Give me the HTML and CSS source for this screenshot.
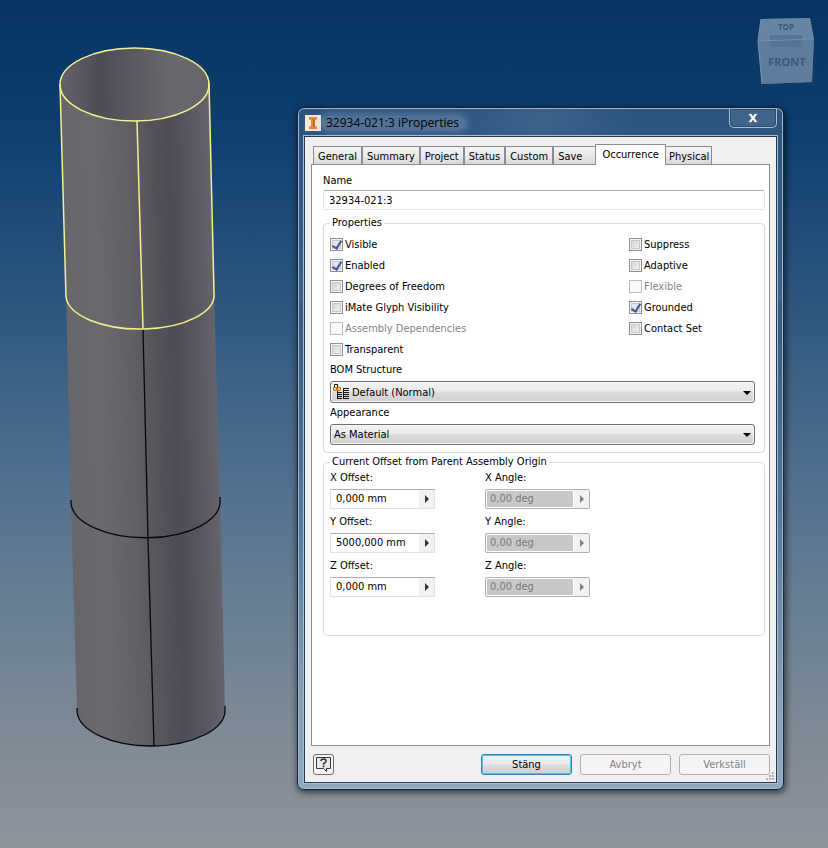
FILE: index.html
```html
<!DOCTYPE html>
<html lang="en">
<head>
<meta charset="utf-8">
<title>32934-021:3 iProperties</title>
<link rel="stylesheet" href="styles.css">
</head>
<body>
<main class="desktop">
  <svg class="model" viewBox="0 0 180 720" aria-hidden="true">
    <defs>
      <linearGradient id="outer" gradientUnits="userSpaceOnUse" x1="18" y1="362" x2="168" y2="358">
        <stop offset="0" stop-color="#67666b"/><stop offset=".22" stop-color="#6a696f"/>
        <stop offset=".45" stop-color="#605f66"/><stop offset=".6" stop-color="#54535a"/>
        <stop offset=".72" stop-color="#4e4d55"/><stop offset=".85" stop-color="#575660"/>
        <stop offset="1" stop-color="#66656c"/>
      </linearGradient>
      <linearGradient id="inner" gradientUnits="userSpaceOnUse" x1="10" y1="46" x2="159" y2="42">
        <stop offset="0" stop-color="#64636b"/><stop offset=".26" stop-color="#4e4d55"/>
        <stop offset=".42" stop-color="#56555d"/><stop offset=".75" stop-color="#69686e"/>
        <stop offset="1" stop-color="#66656b"/>
      </linearGradient>
    </defs>
    <path fill="url(#outer)" d="M10 46L16 257L21 463L27 671A74 36 0 0 0 175 669L170 460L164 253L159 43Z"/>
    <path fill="none" stroke="#08080c" stroke-width="1.3" d="M21 460v3A74 36 0 0 0 170 460v-3M27 668v3A74 36 0 0 0 175 669v-3M93 289L98 498L104 706"/>
    <ellipse cx="84.500" cy="44.500" rx="74.500" ry="36.500" fill="url(#inner)"/>
    <g fill="none" stroke="#f2f28c" stroke-width="1.5">
      <ellipse cx="84.500" cy="44.500" rx="74.500" ry="36.500"/>
      <path d="M10 44L16 257A74 34 0 0 0 164 253L159 43M87 81L93 289"/>
    </g>
  </svg>

  <svg class="viewcube" viewBox="0 0 64 76" role="img" aria-label="View cube">
    <path fill="#557595" d="M6 9L55 8L59 29L57 72L7 74L3 31Z"/>
    <path fill="#6684a3" d="M6 9L55 8L59 29L3 31Z"/>
    <path fill="#5e7c9b" d="M3 31L59 29L57 72L7 74Z"/>
    <path fill="#577294" d="M15 25H47V37H15Z"/>
    <path fill="none" stroke="#7591ad" d="M3 31L59 29M6 9L3 31L7 74"/>
    <text class="cube-top" x="31" y="20" text-anchor="middle">TOP</text>
    <text class="cube-front" x="32" y="56" text-anchor="middle">FRONT</text>
  </svg>

  <section class="dialog" role="dialog" aria-labelledby="dialog-title">
    <header class="titlebar">
      <svg class="app-icon" viewBox="0 0 16 16" aria-hidden="true"><path fill="#fbe9d8" d="M0 0h16v16H0z"/><path fill="#e08a3c" d="M4 2h8v2.500L10 5v6l2 .5V14H4v-2.500L6 11V5L4 4.500z"/><path fill="#b8621c" d="M8 4h1.500v8H8z"/></svg>
      <h1 id="dialog-title">32934-021:3 iProperties</h1>
      <button class="close" type="button" aria-label="Close"><svg viewBox="0 0 12 10" aria-hidden="true"><path fill="#fff" stroke="#34506f" stroke-width=".6" d="M1 .5h3.300L6 2.800 7.700.5H11L7.800 5 11 9.500H7.700L6 7.200 4.300 9.500H1L4.200 5z"/></svg></button>
    </header>
    <form class="client">
      <nav class="tabs" role="tablist">
        <button type="button" role="tab">General</button>
        <button type="button" role="tab">Summary</button>
        <button type="button" role="tab">Project</button>
        <button type="button" role="tab">Status</button>
        <button type="button" role="tab">Custom</button>
        <button type="button" role="tab" class="tab-save">Save</button>
        <button type="button" role="tab" class="active" aria-selected="true">Occurrence</button>
        <button type="button" role="tab" class="tab-last">Physical</button>
      </nav>
      <div class="panel" role="tabpanel">
        <label class="name-label" for="name">Name</label>
        <input class="name" id="name" type="text" value="32934-021:3">

        <fieldset class="properties">
          <legend>Properties</legend>
          <div class="checks">
            <div class="check-column">
              <label><input type="checkbox" checked>Visible</label>
              <label><input type="checkbox" checked>Enabled</label>
              <label><input type="checkbox">Degrees of Freedom</label>
              <label><input type="checkbox">iMate Glyph Visibility</label>
              <label class="off"><input type="checkbox" disabled>Assembly Dependencies</label>
              <label><input type="checkbox">Transparent</label>
            </div>
            <div class="check-column">
              <label><input type="checkbox">Suppress</label>
              <label><input type="checkbox">Adaptive</label>
              <label class="off"><input type="checkbox" disabled>Flexible</label>
              <label><input type="checkbox" checked>Grounded</label>
              <label><input type="checkbox">Contact Set</label>
            </div>
          </div>
          <label class="block-label" for="bom">BOM Structure</label>
          <div class="drop with-icon">
            <select id="bom"><option>Default (Normal)</option></select>
            <svg class="bom-icon" viewBox="0 0 17 16" aria-hidden="true"><path fill="none" stroke="#111" d="M1.500.5h3v3h-3zM4.500 6v9M10.500 4v11"/><path fill="#fbd28a" stroke="#d9720c" d="M.5 3.500h3v3h-3zM4.500 3.500h3v3h-3z"/><path stroke="#111" d="M4 8.500h5M4 10.500h5M4 12.500h5M4 14.500h5M10 4.500h6M10 6.500h6M10 8.500h6M10 10.500h6M10 12.500h6M10 14.500h6"/></svg>
            <svg class="arrow" viewBox="0 0 8 4" aria-hidden="true"><path d="M0 0h8L4 4z"/></svg>
          </div>
          <label class="block-label" for="appearance">Appearance</label>
          <div class="drop">
            <select id="appearance"><option>As Material</option></select>
            <svg class="arrow" viewBox="0 0 8 4" aria-hidden="true"><path d="M0 0h8L4 4z"/></svg>
          </div>
        </fieldset>

        <fieldset class="offsets">
          <legend>Current Offset from Parent Assembly Origin</legend>
          <div class="offset-grid">
            <div class="field"><label for="xo">X Offset:</label><div class="spin"><input id="xo" type="text" value="0,000 mm"><button type="button" aria-label="X offset options"><svg viewBox="0 0 4 8"><path d="M0 0l4 4-4 4z"/></svg></button></div></div>
            <div class="field"><label for="xa">X Angle:</label><div class="spin locked"><input id="xa" type="text" value="0,00 deg" disabled><button type="button" disabled aria-label="X angle options"><svg viewBox="0 0 4 8"><path d="M0 0l4 4-4 4z"/></svg></button></div></div>
            <div class="field"><label for="yo">Y Offset:</label><div class="spin"><input id="yo" type="text" value="5000,000 mm"><button type="button" aria-label="Y offset options"><svg viewBox="0 0 4 8"><path d="M0 0l4 4-4 4z"/></svg></button></div></div>
            <div class="field"><label for="ya">Y Angle:</label><div class="spin locked"><input id="ya" type="text" value="0,00 deg" disabled><button type="button" disabled aria-label="Y angle options"><svg viewBox="0 0 4 8"><path d="M0 0l4 4-4 4z"/></svg></button></div></div>
            <div class="field"><label for="zo">Z Offset:</label><div class="spin"><input id="zo" type="text" value="0,000 mm"><button type="button" aria-label="Z offset options"><svg viewBox="0 0 4 8"><path d="M0 0l4 4-4 4z"/></svg></button></div></div>
            <div class="field"><label for="za">Z Angle:</label><div class="spin locked"><input id="za" type="text" value="0,00 deg" disabled><button type="button" disabled aria-label="Z angle options"><svg viewBox="0 0 4 8"><path d="M0 0l4 4-4 4z"/></svg></button></div></div>
          </div>
        </fieldset>
      </div>
      <footer class="actions">
        <button class="help" type="button" aria-label="Help"><svg viewBox="0 0 17 17" aria-hidden="true"><path fill="#e6e8ec" stroke="#39393f" d="M1.500 1.500h14v11h-4v3L8.500 12.500h-7z"/><path fill="none" stroke="#26262c" stroke-width="1.500" d="M6 5q0-2 2.500-2T11 5q0 1-1.300 1.800Q8.500 7.500 8.500 8.700"/><path fill="#26262c" d="M7.700 9.700h1.700v1.600H7.700z"/></svg></button>
        <button class="action default" type="button">Stäng</button>
        <button class="action" type="button" disabled>Avbryt</button>
        <button class="action" type="button" disabled>Verkställ</button>
      </footer>
      <svg class="grip" viewBox="0 0 9 9" aria-hidden="true"><path fill="#b4b4b4" d="M6 0h2v2H6zM3 3h2v2H3zM6 3h2v2H6zM0 6h2v2H0zM3 6h2v2H3zM6 6h2v2H6z"/></svg>
    </form>
  </section>
</main>
</body>
</html>
```
FILE: styles.css
```css
* { box-sizing: border-box; }

body {
  margin: 0;
  color: #000;
  font: 11px/14px Tahoma, "DejaVu Sans Condensed", sans-serif;
}

button, input, select { font: inherit; color: inherit; margin: 0; }

svg { display: block; }

.desktop {
  position: relative;
  display: flow-root;
  min-height: 100vh;
  background: linear-gradient(#073462, #0f3f70 16%, #2f587f 37%, #54718f 58%, #6f8292 76%, #848d96 90%, #8e939b);
}

.model { position: absolute; left: 50px; top: 40px; width: 180px; height: 720px; }

.viewcube { position: absolute; right: 9px; top: 10px; width: 64px; height: 76px; }
.cube-top, .cube-front { fill: #3e587b; font-family: "Open Sans", sans-serif; font-weight: 700; }
.cube-top { font-size: 8px; }
.cube-front { font-size: 11px; }

.dialog {
  margin: 107px 44px 58px 297px;
  padding: 1px 6px 6px;
  border: 1px solid #10263d;
  border-radius: 7px;
  background: linear-gradient(100deg, transparent 30%, #ffffff12 50%, transparent 70%) 0 0 / 100% 28px no-repeat,
    linear-gradient(#2d547f, #345c86 20%, #3f638a 28%, #365a80 29%, #55789b 60%, #8aa0b4 88%, #91a8bd);
  box-shadow: inset 0 0 0 1px #9db8d0, 1px 2px 6px 1px #00000090;
}

.titlebar { display: flex; align-items: center; height: 27px; padding-left: 1px; }
.app-icon { width: 16px; height: 16px; }
.titlebar h1 {
  margin: 0;
  padding: 0 6px 0 5px;
  border-radius: 8px;
  background: #a4bbd24d;
  box-shadow: 0 0 7px 3px #a4bbd24d;
  font: 12px/14px "Open Sans", sans-serif;
}
.close {
  display: grid;
  place-items: center;
  align-self: flex-start;
  width: 48px;
  height: 19px;
  margin-left: auto;
  padding: 0;
  border: 1px solid #a6bdd3;
  border-top: 0;
  border-radius: 0 0 5px 5px;
  background: #3f658c;
  box-shadow: inset 0 0 0 1px #2b4b6d;
}
.close svg { width: 12px; height: 10px; }

.client {
  position: relative;
  padding: 7px 6px 7px;
  border: 1px solid #263b52;
  outline: 1px solid #a7bed1;
  background: #f0f0f0;
}

.tabs { display: flex; align-items: flex-end; height: 20px; padding-left: 2px; }
.tabs button {
  height: 18px;
  padding: 2px 4px 0;
  border: 1px solid #898c95;
  border-bottom: 0;
  background: linear-gradient(#f3f3f3, #ebebeb 50%, #d8d8d8);
}
.tabs .tab-save { padding-right: 13px; }
.tabs .active { position: relative; z-index: 1; height: 21px; margin: 0 -1px -1px; padding: 0 6px 1px; background: #fff; }
.tabs .tab-last { padding-left: 3px; padding-right: 2px; }

.panel { min-height: 582px; padding: 9px 4px 0 11px; border: 1px solid #898c95; background: #fff; }
.name-label { display: block; }
.name {
  display: block;
  width: 100%;
  height: 20px;
  margin-top: 2px;
  padding: 0 5px;
  border: 1px solid #e2e8ef;
  border-top-color: #abadb3;
  border-radius: 2px;
}

fieldset { min-width: 0; margin: 0; border: 1px solid #d5dfe5; border-radius: 4px; }
legend { padding: 0 2px; }
.properties { margin-top: 6px; padding: 4px 9px 7px 6px; }
.offsets { margin-top: 2px; padding: 2px 6px 38px; }

.checks { display: flex; justify-content: space-between; }
.check-column label { display: flex; align-items: center; gap: 2px; height: 21px; }
.check-column:last-child { width: 126px; }
.off { color: #838383; }

input[type="checkbox"] {
  appearance: none;
  display: grid;
  place-items: center;
  width: 13px;
  height: 13px;
  border: 1px solid #8e8f8f;
  background: linear-gradient(135deg, #ccd0d4, #f6f6f6);
  box-shadow: inset 0 0 0 1px #f4f4f4, inset 0 0 0 2px #c5c9cd;
}
input[type="checkbox"]:checked { background: #dfe5f5; }
input[type="checkbox"]:checked::before {
  content: "";
  width: 4px;
  height: 8px;
  margin-bottom: 2px;
  border: solid #44558d;
  border-width: 0 2px 2px 0;
  transform: rotate(32deg);
}
input[type="checkbox"]:disabled { border-color: #bcbcbc; background: #fafafa; box-shadow: none; }

.block-label { display: block; margin-top: 3px; }
.drop { position: relative; margin-top: 4px; }
.drop select {
  appearance: none;
  display: block;
  width: 100%;
  height: 21px;
  padding: 0 20px 0 3px;
  border: 1px solid #707070;
  border-radius: 3px;
  background: linear-gradient(#f2f2f2, #ebebeb 45%, #dddddd 50%, #cfcfcf);
  box-shadow: inset 0 0 0 1px #f8f8f8;
}
.drop.with-icon select { height: 22px; padding: 1px 20px 0 21px; }
.arrow { position: absolute; right: 4px; top: 9px; width: 8px; height: 4px; }
.with-icon .arrow { top: 10px; }
.bom-icon { position: absolute; left: 3px; top: 3px; width: 17px; height: 16px; }

.offset-grid { display: grid; grid-template-columns: 105px 105px; gap: 6px 50px; }
.field label { display: block; }
.spin {
  display: flex;
  height: 20px;
  margin-top: 4px;
  border: 1px solid #e2e3ea;
  border-top-color: #abadb3;
}
.spin input { flex: 1; min-width: 0; padding: 0 5px; border: 0; background: #fff; }
.spin button { display: grid; place-items: center; width: 15px; padding: 0; border: 0; background: #f2f2f2; }
.spin svg { width: 4px; height: 8px; fill: #333; }
.spin.locked { border-color: #afafaf; border-radius: 2px; }
.spin.locked input { margin: 1px; padding: 0 3px; background: #c8c8c8; color: #787878; }
.spin.locked svg { fill: #808080; }

.actions { display: flex; align-items: center; gap: 8px; height: 21px; margin-top: 8px; padding-left: 2px; }
.help {
  display: grid;
  place-items: center;
  width: 21px;
  height: 21px;
  margin-right: auto;
  padding: 0;
  border: 1px solid #707070;
  border-radius: 3px;
  background: #f4f4f4;
}
.help svg { width: 17px; height: 17px; }
.action { width: 91px; height: 21px; padding: 0; border: 1px solid #adb2b5; border-radius: 3px; background: #f4f4f4; }
.action:disabled { color: #838383; }
.action.default {
  border-color: #3c7fb1;
  background: linear-gradient(#f2f2f2, #ebebeb 48%, #dddddd 52%, #cfcfcf);
  box-shadow: inset 0 0 0 1px #48c8f0;
}
.grip { position: absolute; right: 1px; bottom: 1px; width: 9px; height: 9px; }
```
